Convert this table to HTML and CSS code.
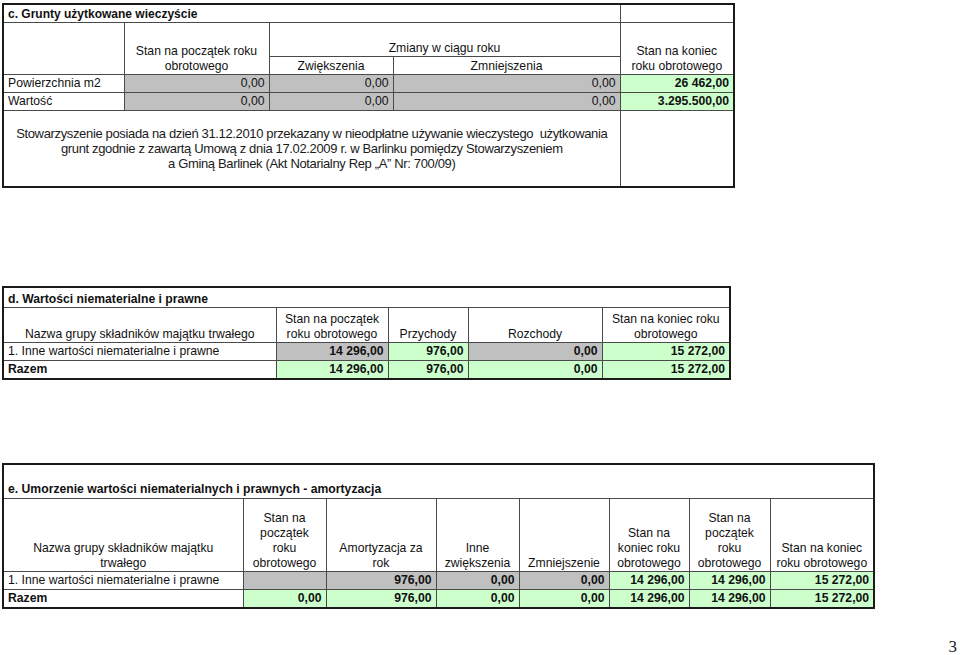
FILE: index.html
```html
<!DOCTYPE html>
<html lang="pl">
<head>
<meta charset="utf-8">
<title>Grunty i wartości niematerialne</title>
<link rel="stylesheet" href="styles.css">
</head>
<body>
<div class="page">

<table class="tbl tbl-c">
  <colgroup>
    <col class="c0"><col class="c1"><col class="c2"><col class="c3"><col class="c4">
  </colgroup>
  <tr class="r-title">
    <td colspan="4" class="title">c. Grunty użytkowane wieczyście</td>
    <td></td>
  </tr>
  <tr class="r-h1">
    <td rowspan="2"></td>
    <td rowspan="2" class="hd">Stan na początek roku<br>obrotowego</td>
    <td colspan="2" class="hd">Zmiany w ciągu roku</td>
    <td rowspan="2" class="hd">Stan na koniec<br>roku obrotowego</td>
  </tr>
  <tr class="r-h2">
    <td class="hd">Zwiększenia</td>
    <td class="hd">Zmniejszenia</td>
  </tr>
  <tr class="r-data">
    <td class="name">Powierzchnia m2</td>
    <td class="num grey">0,00</td>
    <td class="num grey">0,00</td>
    <td class="num grey">0,00</td>
    <td class="num green b">26 462,00</td>
  </tr>
  <tr class="r-data">
    <td class="name">Wartość</td>
    <td class="num grey">0,00</td>
    <td class="num grey">0,00</td>
    <td class="num grey">0,00</td>
    <td class="num green b">3.295.500,00</td>
  </tr>
  <tr class="r-note">
    <td colspan="4" class="note">Stowarzyszenie posiada na dzień 31.12.2010 przekazany w nieodpłatne używanie wieczystego&nbsp; użytkowania<br>grunt zgodnie z zawartą Umową z dnia 17.02.2009 r. w Barlinku pomiędzy Stowarzyszeniem<br>a Gminą Barlinek (Akt Notarialny Rep „A” Nr: 700/09)</td>
    <td></td>
  </tr>
</table>

<table class="tbl tbl-d">
  <colgroup>
    <col class="d0"><col class="d1"><col class="d2"><col class="d3"><col class="d4">
  </colgroup>
  <tr class="r-title">
    <td colspan="5" class="title">d. Wartości niematerialne i prawne</td>
  </tr>
  <tr class="r-hd">
    <td class="hd">Nazwa grupy składników majątku trwałego</td>
    <td class="hd">Stan na początek<br>roku obrotowego</td>
    <td class="hd">Przychody</td>
    <td class="hd">Rozchody</td>
    <td class="hd">Stan na koniec roku<br>obrotowego</td>
  </tr>
  <tr class="r-data">
    <td class="name">1. Inne wartości niematerialne i prawne</td>
    <td class="num grey b">14 296,00</td>
    <td class="num green b">976,00</td>
    <td class="num grey b">0,00</td>
    <td class="num green b">15 272,00</td>
  </tr>
  <tr class="r-data">
    <td class="name b">Razem</td>
    <td class="num green b">14 296,00</td>
    <td class="num green b">976,00</td>
    <td class="num green b">0,00</td>
    <td class="num green b">15 272,00</td>
  </tr>
</table>

<table class="tbl tbl-e">
  <colgroup>
    <col class="e0"><col class="e1"><col class="e2"><col class="e3"><col class="e4"><col class="e5"><col class="e6"><col class="e7">
  </colgroup>
  <tr class="r-title">
    <td colspan="8" class="title">e. Umorzenie wartości niematerialnych i prawnych - amortyzacja</td>
  </tr>
  <tr class="r-hd">
    <td class="hd">Nazwa grupy składników majątku<br>trwałego</td>
    <td class="hd">Stan na<br>początek<br>roku<br>obrotowego</td>
    <td class="hd">Amortyzacja za<br>rok</td>
    <td class="hd">Inne<br>zwiększenia</td>
    <td class="hd">Zmniejszenie</td>
    <td class="hd">Stan na<br>koniec roku<br>obrotowego</td>
    <td class="hd">Stan na<br>początek<br>roku<br>obrotowego</td>
    <td class="hd">Stan na koniec<br>roku obrotowego</td>
  </tr>
  <tr class="r-data">
    <td class="name">1. Inne wartości niematerialne i prawne</td>
    <td class="num grey b"></td>
    <td class="num grey b">976,00</td>
    <td class="num grey b">0,00</td>
    <td class="num grey b">0,00</td>
    <td class="num green b">14 296,00</td>
    <td class="num green b">14 296,00</td>
    <td class="num green b">15 272,00</td>
  </tr>
  <tr class="r-data">
    <td class="name b">Razem</td>
    <td class="num green b">0,00</td>
    <td class="num green b">976,00</td>
    <td class="num green b">0,00</td>
    <td class="num green b">0,00</td>
    <td class="num green b">14 296,00</td>
    <td class="num green b">14 296,00</td>
    <td class="num green b">15 272,00</td>
  </tr>
</table>

<div class="pageno">3</div>
</div>
</body>
</html>
```

FILE: styles.css
```css
html, body {
  margin: 0;
  padding: 0;
  background: #ffffff;
}

body {
  font-family: "Liberation Sans", Arial, sans-serif;
  font-size: 12.2px;
  color: #111111;
  width: 960px;
  height: 655px;
  overflow: hidden;
}

.page {
  position: relative;
  height: 655px;
  padding: 3px 0 0 2px;
  box-sizing: border-box;
}

.tbl {
  border-collapse: collapse;
  table-layout: fixed;
  border: 2px solid #1a1a1a;
}

.tbl td {
  border: 1px solid #4a4a4a;
  padding: 0 4px;
  line-height: 15px;
  white-space: nowrap;
  overflow: hidden;
}

.title {
  font-weight: bold;
  text-align: left;
  vertical-align: bottom;
  padding-left: 4px;
}

.hd {
  text-align: center;
  vertical-align: bottom;
}

.name {
  text-align: left;
  vertical-align: middle;
}

.num {
  text-align: right;
  vertical-align: middle;
}

.b { font-weight: bold; }
.grey { background: #c0c0c0; }
.green { background: #ccffcc; }

/* section c */
.tbl-c { width: 733px; }
.c0 { width: 121px; }
.c1 { width: 145px; }
.c2 { width: 124px; }
.c3 { width: 227px; }
.c4 { width: 114px; }

.tbl-c .r-title td { height: 17px; }
.tbl-c .r-h1 td { height: 33px; }
.tbl-c .r-h2 td { height: 17px; }
.tbl-c .r-data td { height: 17px; }
.tbl-c .r-note td { height: 75px; }
.tbl-c .title { font-size: 12px; }

.note {
  text-align: center;
  vertical-align: middle;
  font-size: 13px;
  line-height: 17.5px;
  letter-spacing: -0.35px;
  color: #1a1a1a;
  padding-bottom: 2px;
}

/* section d */
.tbl-d {
  width: 728px;
  margin-top: 98px;
}
.d0 { width: 273px; }
.d1 { width: 112px; }
.d2 { width: 80px; }
.d3 { width: 134px; }
.d4 { width: 128px; }

.tbl-d .r-title td { height: 19px; }
.tbl-d .r-hd td { height: 34px; }
.tbl-d .r-data td { height: 17px; }

/* section e */
.tbl-e {
  width: 872px;
  margin-top: 83px;
}
.e0 { width: 240px; }
.e1 { width: 83px; }
.e2 { width: 110px; }
.e3 { width: 83px; }
.e4 { width: 90px; }
.e5 { width: 80px; }
.e6 { width: 81px; }
.e7 { width: 104px; }

.tbl-e .r-title td { height: 32px; padding-bottom: 1px; }
.tbl-e .r-hd td { height: 72px; }
.tbl-e .r-data td { height: 17px; }

.pageno {
  position: absolute;
  right: 3px;
  bottom: -2px;
  font-family: "Liberation Serif", "Times New Roman", serif;
  font-size: 17px;
  color: #222;
}
```
